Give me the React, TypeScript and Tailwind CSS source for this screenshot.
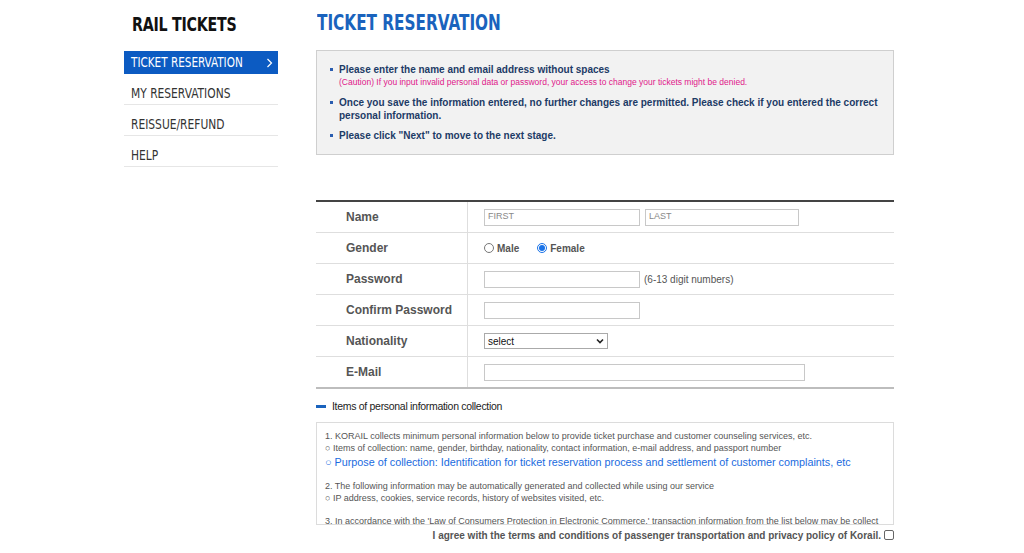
import React from "react";

const narrow = { fontFamily: '"Liberation Sans Narrow", "DejaVu Sans Condensed", "Liberation Sans", sans-serif' };

function Bullet() {
  return <span className="mt-[5px] mr-[6px] inline-block h-[3px] w-[3px] shrink-0 bg-[#2a5db0]" />;
}

function Row({ label, children, last }: { label: string; children: React.ReactNode; last?: boolean }) {
  return (
    <div className={`flex ${last ? "h-[30px]" : "h-[31px] border-b border-[#dedede]"}`}>
      <div className="flex w-[152px] items-center border-r border-[#dedede] pl-[30px] text-[12px] font-bold text-[#555]">
        {label}
      </div>
      <div className="flex flex-1 items-center pl-[16px]">{children}</div>
    </div>
  );
}

function TextBox({ w, placeholder }: { w: string; placeholder?: string }) {
  return (
    <div className={`flex h-[17px] ${w} items-center border border-[#c8c8c8] bg-white pl-[3px] text-[9px] text-[#888]`}>
      {placeholder}
    </div>
  );
}

export default function App() {
  return (
    <div className="min-h-[553px] bg-white" style={{ fontFamily: '"Liberation Sans", Arial, sans-serif' }}>
      <div className="flex pl-[124px]">
        {/* Sidebar */}
        <aside className="w-[154px] shrink-0">
          <div className="h-[51px] pt-[9px] pl-[8px] text-[20px] font-bold text-[#111]" style={narrow}>
            <span className="inline-block origin-left scale-x-[0.79] tracking-[-0.3px]">RAIL TICKETS</span>
          </div>
          <div
            className="flex h-[23px] items-center justify-between bg-[#0c5bc2] pl-[7px] pr-[5px] text-[13.5px] text-white"
            style={narrow}
          >
            <span className="inline-block origin-left scale-x-[0.86]">TICKET RESERVATION</span>
            <svg width="7" height="10" viewBox="0 0 7 10" fill="none" stroke="white" strokeWidth="1.2">
              <path d="M1.5 1l4 4-4 4" />
            </svg>
          </div>
          {["MY RESERVATIONS", "REISSUE/REFUND", "HELP"].map((t) => (
            <div
              key={t}
              className="flex h-[31px] items-center border-b border-[#e6e6e6] pl-[7px] pt-[8px] text-[13.5px] text-[#333]"
              style={narrow}
            >
              <span className="inline-block origin-left scale-x-[0.88]">{t}</span>
            </div>
          ))}
        </aside>

        {/* Main */}
        <main className="ml-[38px] w-[578px]">
          <h1 className="h-[50px] pt-[10px] pl-[1px] text-[21.5px] font-bold leading-[26px] text-[#1a63bd]" style={narrow}>
            <span className="inline-block origin-left scale-x-[0.79]">TICKET RESERVATION</span>
          </h1>

          <div className="h-[105px] border border-[#cfcfcf] bg-[#f2f2f2] pl-[13px] pr-[10px] pt-[12px] text-[10px] font-bold text-[#1d3b66]">
            <div className="flex">
              <Bullet />
              <div>
                <div className="leading-[13px]">Please enter the name and email address without spaces</div>
                <div className="mt-[1px] text-[8.5px] font-normal leading-[11px] text-[#e0188a]">
                  (Caution) If you input invalid personal data or password, your access to change your tickets might be denied.
                </div>
              </div>
            </div>
            <div className="mt-[8px] flex">
              <Bullet />
              <div className="leading-[13px]">
                Once you save the information entered, no further changes are permitted. Please check if you entered the correct personal information.
              </div>
            </div>
            <div className="mt-[7px] flex">
              <Bullet />
              <div className="leading-[13px]">Please click "Next" to move to the next stage.</div>
            </div>
          </div>

          {/* Form table */}
          <div className="mt-[45px] border-t-2 border-b-2 border-t-[#444] border-b-[#bdbdbd]">
            <Row label="Name">
              <TextBox w="w-[156px]" placeholder="FIRST" />
              <div className="ml-[5px]">
                <TextBox w="w-[154px]" placeholder="LAST" />
              </div>
            </Row>
            <Row label="Gender">
              <div className="flex items-center text-[10px] font-bold text-[#555]">
                <span className="inline-block h-[10px] w-[10px] rounded-full border border-[#777] bg-white" />
                <span className="ml-[3px]">Male</span>
                <span className="ml-[18px] flex h-[10px] w-[10px] items-center justify-center rounded-full border border-[#1a73e8] bg-white">
                  <span className="h-[6px] w-[6px] rounded-full bg-[#1a73e8]" />
                </span>
                <span className="ml-[3px]">Female</span>
              </div>
            </Row>
            <Row label="Password">
              <TextBox w="w-[156px]" />
              <span className="ml-[4px] text-[10px] text-[#555]">(6-13 digit numbers)</span>
            </Row>
            <Row label="Confirm Password">
              <TextBox w="w-[156px]" />
            </Row>
            <Row label="Nationality">
              <div className="flex h-[16px] w-[124px] items-center justify-between border border-[#aaa] bg-white pl-[3px] pr-[3px] text-[10px] text-[#111]">
                <span>select</span>
                <svg width="8" height="6" viewBox="0 0 8 6" fill="none" stroke="#222" strokeWidth="1.6">
                  <path d="M1 1.5l3 3 3-3" />
                </svg>
              </div>
            </Row>
            <Row label="E-Mail" last>
              <TextBox w="w-[321px]" />
            </Row>
          </div>

          <div className="mt-[10px] flex items-center">
            <span className="inline-block h-[3px] w-[10px] bg-[#1a63bd]" />
            <span className="ml-[6px] text-[10.5px] tracking-[-0.3px] text-[#222]">Items of personal information collection</span>
          </div>

          <div className="mt-[7px] h-[103px] overflow-hidden border border-[#dcdcdc] pl-[8px] pt-[7px] text-[9px] leading-[12.5px] text-[#555]">
            <div>1. KORAIL collects minimum personal information below to provide ticket purchase and customer counseling services, etc.</div>
            <div>○ Items of collection: name, gender, birthday, nationality, contact information, e-mail address, and passport number</div>
            <div className="text-[10.8px] leading-[14px] text-[#1a6be0]">
              ○ Purpose of collection: Identification for ticket reservation process and settlement of customer complaints, etc
            </div>
            <div className="h-[11px]" />
            <div>2. The following information may be automatically generated and collected while using our service</div>
            <div>○ IP address, cookies, service records, history of websites visited, etc.</div>
            <div className="h-[10px]" />
            <div>3. In accordance with the 'Law of Consumers Protection in Electronic Commerce,' transaction information from the list below may be collect</div>
          </div>

          <div className="mt-[3px] flex items-center justify-end">
            <span className="text-[10px] font-bold text-[#555]">
              I agree with the terms and conditions of passenger transportation and privacy policy of Korail.
            </span>
            <span className="ml-[3px] inline-block h-[10px] w-[10px] rounded-[2px] border border-[#666] bg-white" />
          </div>
        </main>
      </div>
    </div>
  );
}
